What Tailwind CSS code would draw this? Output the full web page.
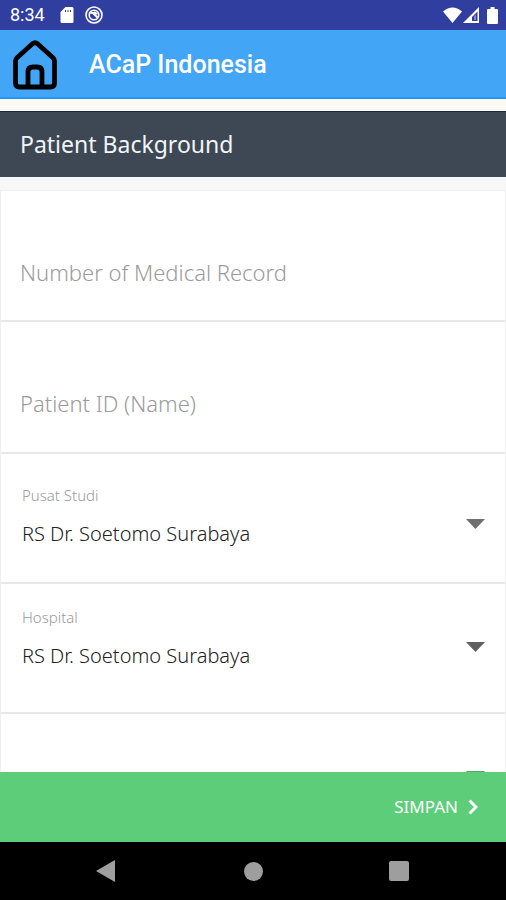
<!DOCTYPE html>
<html lang="id">
<head>
    <meta charset="UTF-8">
    <meta name="viewport" content="width=device-width, initial-scale=1.0">
    <title>ACaP Indonesia</title>
    <script src="https://cdn.jsdelivr.net/npm/@tailwindcss/browser@4"></script>
</head>
<body class="flex h-screen flex-col overflow-hidden bg-white font-['Noto_Sans',sans-serif]">

    <!-- Status bar -->
    <div class="flex h-[30px] shrink-0 items-center bg-[#303f9f] pr-2 pl-[10px] font-[Roboto,sans-serif] text-white">
        <span class="text-lg leading-none">8:34</span>
        <svg class="ml-[14px] h-4 w-4" viewBox="0 0 16 16" fill="currentColor" aria-hidden="true">
            <path fill-rule="evenodd" d="M6.500 0H13a1.500 1.500 0 0 1 1.500 1.500v13A1.500 1.500 0 0 1 13 16H3a1.500 1.500 0 0 1-1.500-1.500V5zM6 3v2h1V3zm2.500 0v2h1V3zM11 3v2h1V3z"/>
        </svg>
        <svg class="ml-[10px] h-[18px] w-[18px]" viewBox="0 0 18 18" fill="none" stroke="currentColor" aria-hidden="true">
            <circle cx="9" cy="9" r="8" stroke-width="1.600"/>
            <circle cx="9" cy="9" r="4.800" stroke-width="1.600"/>
            <path d="M4.500 6.500 8 7l4.500 4.500M9 6l3.500 2" stroke-width="2"/>
        </svg>
        <svg class="ml-auto h-4 w-[19px]" viewBox="0 0 19 16" fill="currentColor" aria-hidden="true">
            <path d="M0 4.500Q9.500-3.500 19 4.500L9.500 16z"/>
        </svg>
        <svg class="ml-px h-4 w-4" viewBox="0 0 16 16" fill="currentColor" aria-hidden="true">
            <path fill-rule="evenodd" d="M16 0v16H0zM14.500 4.500 9 10v4h5.500z"/>
            <path d="M11 9.500l2-2V13h-2z" opacity=".4"/>
        </svg>
        <svg class="ml-2 h-[17px] w-[11px]" viewBox="0 0 11 17" fill="currentColor" aria-hidden="true">
            <path d="M3.500 0h4v2H10q1 0 1 1v13q0 1-1 1H1q-1 0-1-1V3q0-1 1-1h2.500z"/>
        </svg>
    </div>

    <!-- App bar -->
    <header class="flex h-[69px] shrink-0 items-center border-b-2 border-[#2196f3] bg-[#42a5f5] pt-[2px] pl-3">
        <a href="#" aria-label="Home">
            <svg class="h-[50px] w-[46px]" viewBox="0 0 46 50" fill="none" stroke="#000" stroke-width="4.800" stroke-linejoin="round" aria-hidden="true">
                <path d="M3.500 21Q3.500 19 5 17.700L20.500 3.700Q23 1.700 25.500 3.700L41 17.700Q42.500 19 42.500 21V43q0 4-4 4h-31Q3.500 47 3.500 43z"/>
                <path d="M16 47V32q0-5 5-5h4q5 0 5 5v15"/>
            </svg>
        </a>
        <h1 class="ml-[31px] font-[Roboto,sans-serif] text-[25px] font-medium text-white">ACaP Indonesia</h1>
    </header>

    <!-- Section title -->
    <div class="shrink-0 bg-[#fdf9f5] pt-3">
        <h2 class="flex h-[66px] items-center border-t border-[#1b2836] bg-[#3e4854] px-5 text-[23px] text-[#f1f5f9]">Patient Background</h2>
    </div>

    <!-- Form -->
    <form id="patient" class="min-h-0 flex-1 overflow-hidden bg-[#f8f8f8] pt-[13px]">
        <div class="border-x border-t border-[#f0f0f0] bg-white">
            <div class="h-[131px] border-b-2 border-[#e8e8e8]">
                <input type="text" aria-label="Number of Medical Record" placeholder="Number of Medical Record" class="h-full w-full px-[19px] pt-8 text-[22px] font-light text-neutral-800 outline-none placeholder:text-[#9b9b9b]">
            </div>
            <div class="h-[132px] border-b-2 border-[#e8e8e8]">
                <input type="text" aria-label="Patient ID (Name)" placeholder="Patient ID (Name)" class="h-full w-full px-[19px] pt-8 text-[22px] font-light text-neutral-800 outline-none placeholder:text-[#9b9b9b]">
            </div>
            <div class="relative h-[130px] border-b-2 border-[#e8e8e8] px-[21px] pt-[31px]">
                <label for="center" class="block text-[15px] leading-5 font-light text-[#9b9b9b]">Pusat Studi</label>
                <select id="center" class="mt-3 block h-[34px] w-full appearance-none text-xl font-light text-[#222]">
                    <option>RS Dr. Soetomo Surabaya</option>
                </select>
                <svg class="pointer-events-none absolute top-[65px] right-5 h-[10px] w-[19px]" viewBox="0 0 19 10" fill="#707070" aria-hidden="true"><path d="M0 0h19L9.500 10z"/></svg>
            </div>
            <div class="relative h-[130px] border-b-2 border-[#e8e8e8] px-[21px] pt-[23px]">
                <label for="hospital" class="block text-[15px] leading-5 font-light text-[#9b9b9b]">Hospital</label>
                <select id="hospital" class="mt-3 block h-[34px] w-full appearance-none text-xl font-light text-[#222]">
                    <option>RS Dr. Soetomo Surabaya</option>
                </select>
                <svg class="pointer-events-none absolute top-[58px] right-5 h-[10px] w-[19px]" viewBox="0 0 19 10" fill="#606060" aria-hidden="true"><path d="M0 0h19L9.500 10z"/></svg>
            </div>
            <div class="relative h-[130px]">
                <svg class="pointer-events-none absolute top-[57px] right-5 h-[10px] w-[19px]" viewBox="0 0 19 10" fill="#4caa65" aria-hidden="true"><path d="M0 0h19L9.500 10z"/></svg>
            </div>
        </div>
    </form>

    <!-- Save bar -->
    <div class="flex h-[70px] shrink-0 justify-end bg-[#5dcd79] pr-7">
        <button type="submit" form="patient" class="flex items-center gap-[10px] text-[17px] text-white">
            SIMPAN
            <svg class="h-4 w-[10px]" viewBox="0 0 10 16" fill="none" stroke="currentColor" stroke-width="3" aria-hidden="true"><path d="m1.500 1.500 6.500 6.500-6.500 6.500"/></svg>
        </button>
    </div>

    <!-- Android navigation -->
    <nav class="grid h-[58px] shrink-0 grid-cols-[1fr_auto_1fr] items-center bg-black text-[#9e9e9e]">
        <button type="button" aria-label="Back" class="ml-24 justify-self-start">
            <svg class="h-[22px] w-[19px]" viewBox="0 0 19 22" fill="currentColor"><path d="M19 0v22L0 11z"/></svg>
        </button>
        <button type="button" aria-label="Home screen" class="h-[19px] w-[19px] rounded-full bg-current"></button>
        <button type="button" aria-label="Recent apps" class="mr-[97px] h-5 w-5 justify-self-end rounded-xs bg-current"></button>
    </nav>

</body>
</html>
